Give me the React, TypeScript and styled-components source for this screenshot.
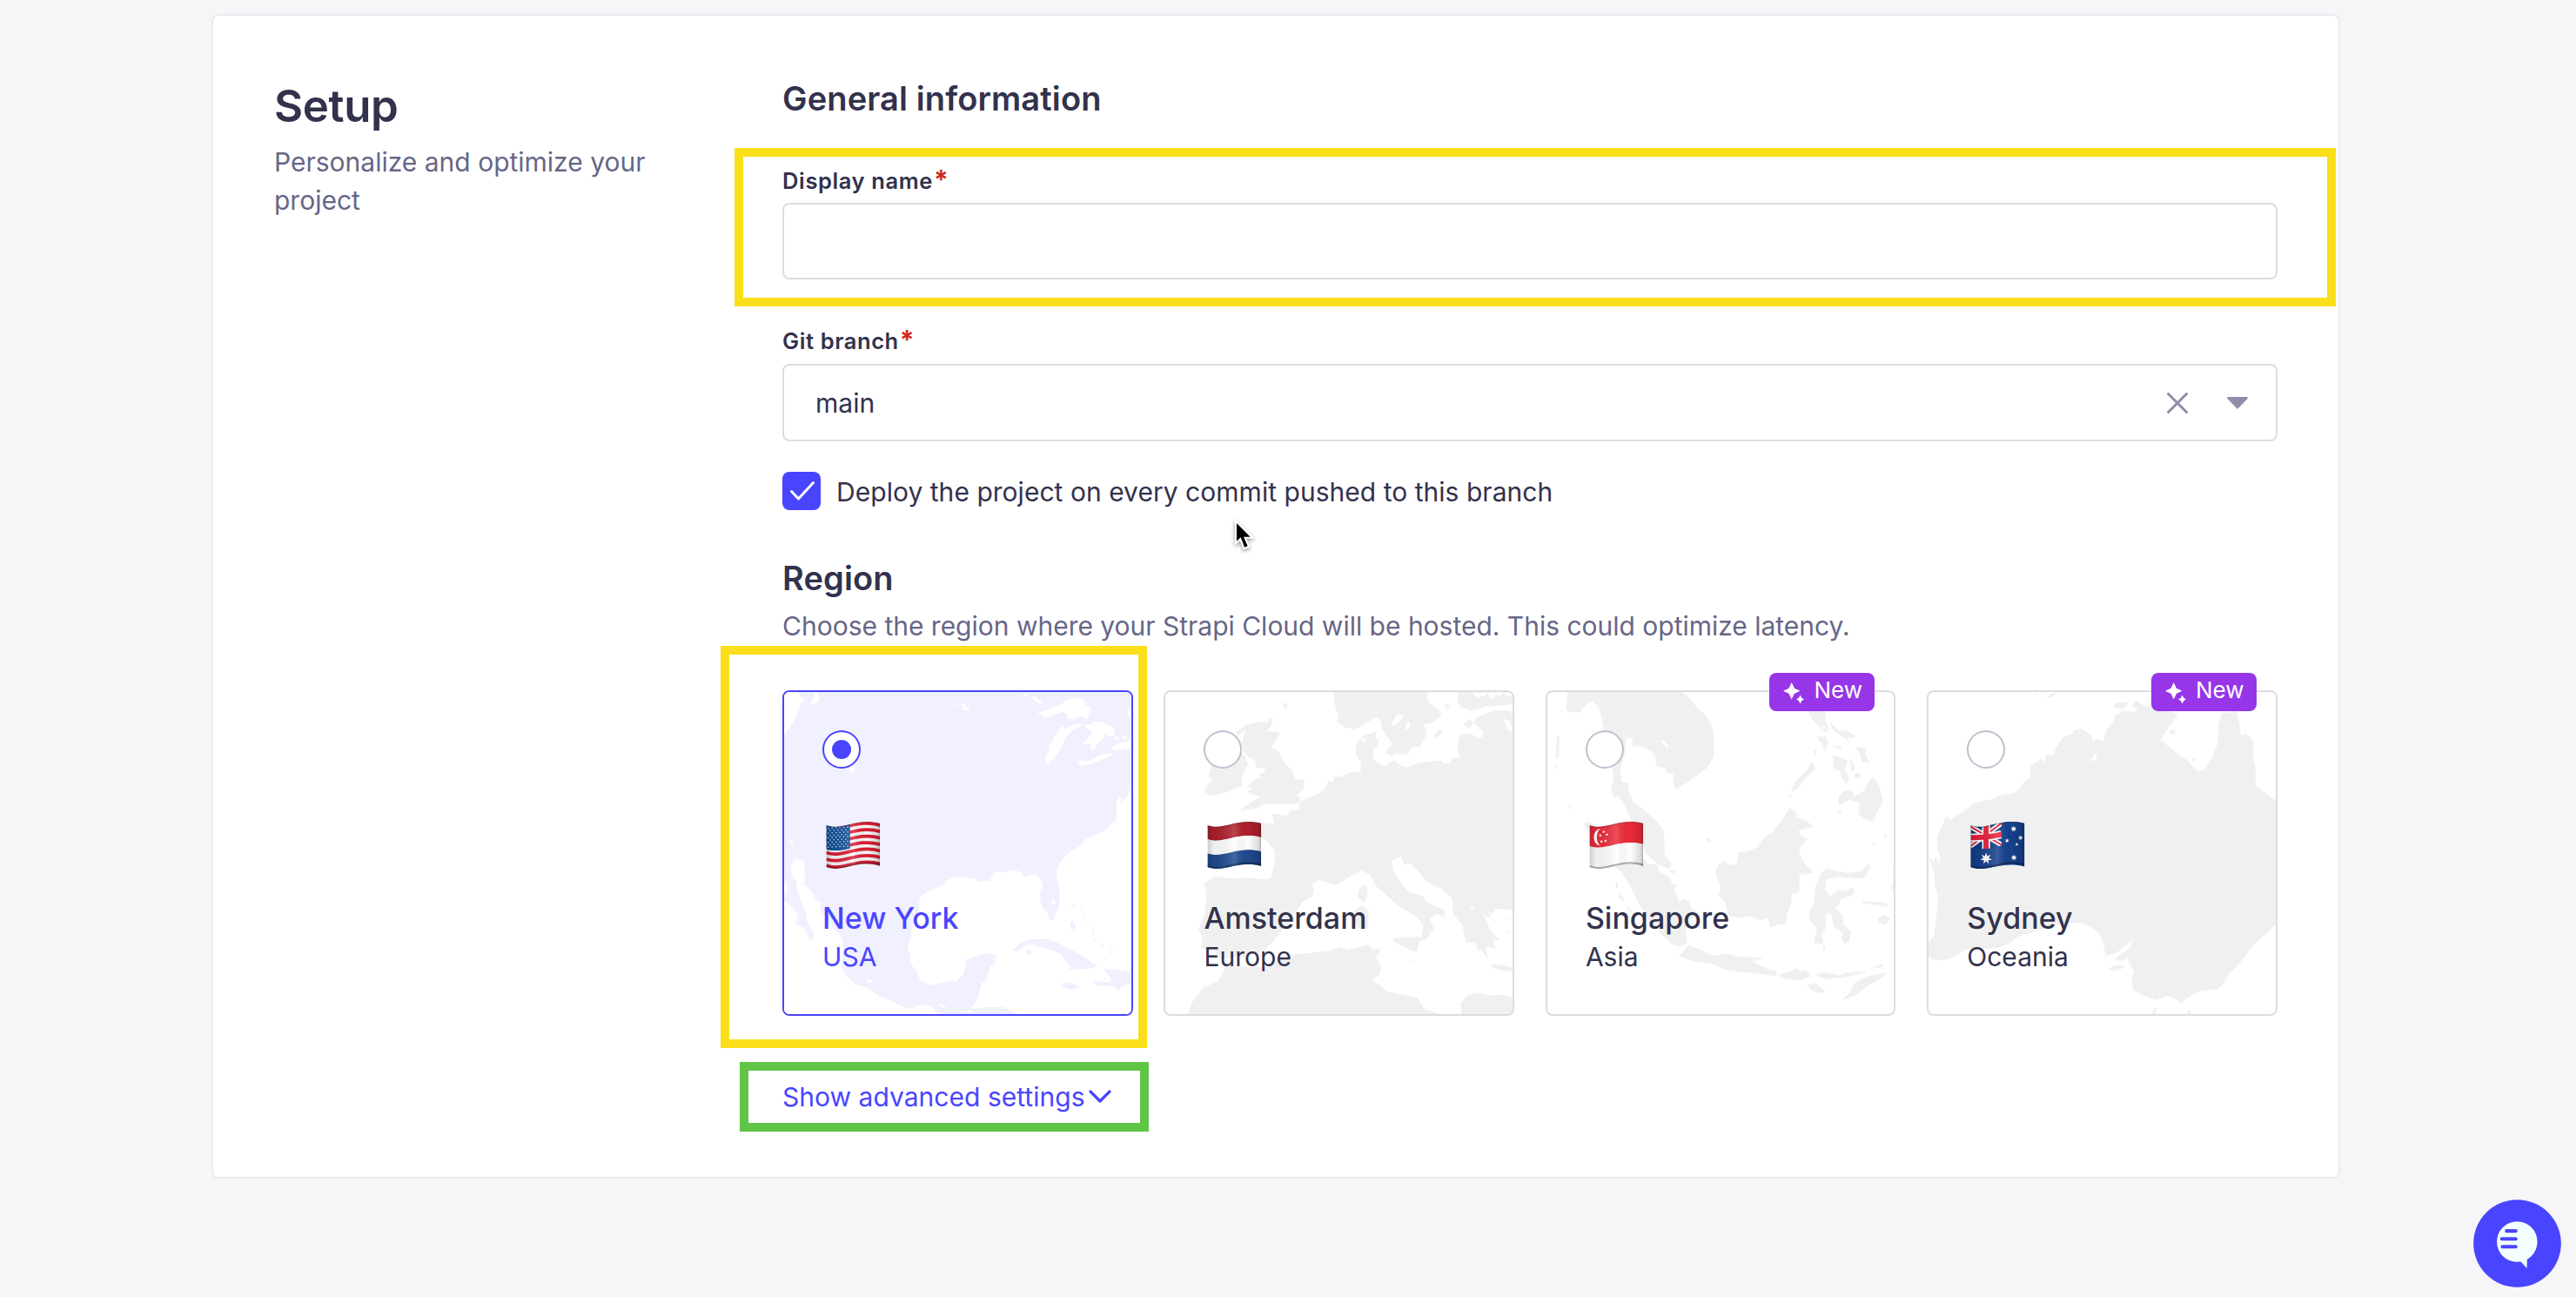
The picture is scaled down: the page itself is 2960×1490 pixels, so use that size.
import React from 'react';
import styled, { createGlobalStyle } from 'styled-components';

const c = {
  ink: '#32324d',
  muted: '#666687',
  icon: '#8e8ea9',
  radio: '#c0c0cf',
  line: '#dcdce4',
  panelLine: '#eaeaef',
  page: '#f6f6f9',
  primary: '#4945ff',
  primarySoft: '#f0f0ff',
  land: '#f0f0f0',
  danger: '#d02b20',
  badge: '#9736e8',
  yellow: '#fbdf1b',
  green: '#60c446',
};

const GlobalStyle = createGlobalStyle`
  * { box-sizing: border-box; }
  body {
    margin: 0;
    background: ${c.page};
    color: ${c.ink};
    font-family: Inter, "Liberation Sans", sans-serif;
    overflow: hidden;
  }
  h1, h2, p { margin: 0; }
`;

const Page = styled.main`
  position: relative;
  width: 2960px;
  height: 1490px;
  padding: 16px 0 0 243px;
`;

const Panel = styled.section`
  display: flex;
  width: 2446px;
  height: 1338px;
  padding: 71px 70px 70px;
  background: #fff;
  border: 2px solid ${c.panelLine};
  border-radius: 8px;
`;

const Intro = styled.div`
  flex: none;
  width: 584.1px;
  padding-top: 3px;
`;

const Title = styled.h1`
  font-size: 51px;
  line-height: 60px;
  font-weight: 600;
  letter-spacing: -0.4px;
`;

const Lead = styled.p`
  width: 460px;
  margin-top: 13px;
  font-size: 30px;
  line-height: 43.7px;
  letter-spacing: 0;
  color: ${c.muted};
`;

const Form = styled.div`
  display: flex;
  flex: none;
  flex-direction: column;
  width: 1717.8px;
`;

const Heading = styled.h2<{ $gap?: number }>`
  margin-top: ${(p) => p.$gap ?? 0}px;
  font-size: 38px;
  line-height: 48px;
  font-weight: 600;
  letter-spacing: 0.12px;
`;

const Field = styled.div<{ $gap: number }>`
  display: flex;
  flex-direction: column;
  gap: ${(p) => p.$gap}px;
  margin-top: 53px;
`;

const Label = styled.label`
  font-size: 25.5px;
  line-height: 36px;
  font-weight: 600;
  letter-spacing: 0.6px;
`;

const Required = styled.span`
  color: ${c.danger};
  margin-left: 1px;
  font-size: 30px;
  line-height: 0;
  font-weight: 700;
`;

const Control = styled.div<{ $height: number }>`
  display: flex;
  align-items: center;
  height: ${(p) => p.$height}px;
  padding: 0 32px 0 36px;
  border: 2px solid ${c.line};
  border-radius: 8px;
  font-size: 30px;
  line-height: 44px;
`;

const ControlValue = styled.span`
  flex: 1;
`;

const ControlIcons = styled.div`
  display: flex;
  align-items: center;
  gap: 45px;
`;

const CheckRow = styled.div`
  display: flex;
  gap: 18px;
  margin-top: 35px;
  height: 44px;
`;

const CheckBox = styled.span`
  display: flex;
  align-items: center;
  justify-content: center;
  width: 44px;
  height: 44px;
  padding-left: 1px;
  border-radius: 8px;
  background: ${c.primary};
`;

const CheckLabel = styled.span`
  padding-top: 1px;
  font-size: 30px;
  line-height: 44px;
  letter-spacing: 0.03px;
`;

const Hint = styled.p`
  margin-top: 9px;
  font-size: 30px;
  line-height: 44px;
  letter-spacing: -0.01px;
  color: ${c.muted};
`;

const Regions = styled.div`
  display: grid;
  grid-template-columns: repeat(4, 1fr);
  gap: 35.8px;
  margin-top: 52px;
`;

const RegionCard = styled.div<{ $selected?: boolean }>`
  position: relative;
  display: flex;
  flex-direction: column;
  height: 374px;
  padding: 44px;
  border: 2px solid ${(p) => (p.$selected ? c.primary : c.line)};
  border-radius: 8px;
  color: ${(p) => (p.$selected ? c.primary : c.ink)};
`;

const MapSvg = styled.svg`
  position: absolute;
  inset: 0;
  width: 100%;
  height: 100%;
  border-radius: 6px;
`;

const Radio = styled.span<{ $selected?: boolean }>`
  position: relative;
  display: flex;
  align-items: center;
  justify-content: center;
  width: 44px;
  height: 44px;
  border: 2px solid ${(p) => (p.$selected ? c.primary : c.radio)};
  border-radius: 50%;
  background: #fff;
`;

const RadioDot = styled.span`
  width: 22px;
  height: 22px;
  border-radius: 50%;
  background: ${c.primary};
`;

const FlagSvg = styled.svg`
  position: relative;
  width: 63px;
  height: 57px;
  margin: 60px 0 34px 4px;
`;

const City = styled.span`
  position: relative;
  font-size: 34px;
  line-height: 44px;
  font-weight: 500;
`;

const Country = styled.span`
  position: relative;
  font-size: 30px;
  line-height: 44px;
`;

const NewBadge = styled.span`
  position: absolute;
  top: -22px;
  right: 22px;
  display: flex;
  align-items: center;
  gap: 11px;
  width: 121px;
  height: 44px;
  padding: 0 0 4px 16px;
  border-radius: 8px;
  background: ${c.badge};
  color: #fff;
  font-size: 26px;
  line-height: 36px;
`;

const BadgeIcon = styled.svg`
  width: 24px;
  height: 25px;
  margin-top: 6px;
`;

const AdvancedLink = styled.a`
  display: flex;
  align-items: center;
  gap: 5px;
  margin-top: 71px;
  font-size: 30px;
  line-height: 44px;
  letter-spacing: 0.02px;
  color: ${c.primary};
`;

const Highlight = styled.div<{ $x: number; $y: number; $w: number; $h: number; $color: string }>`
  position: absolute;
  left: ${(p) => p.$x}px;
  top: ${(p) => p.$y}px;
  width: ${(p) => p.$w}px;
  height: ${(p) => p.$h}px;
  border: 10px solid ${(p) => p.$color};
  pointer-events: none;
`;

const Pointer = styled.svg`
  position: absolute;
  left: 1412px;
  top: 594px;
  width: 36px;
  height: 46px;
  filter: drop-shadow(0 2px 2px rgba(0, 0, 0, 0.4));
`;

const ChatButton = styled.svg`
  position: absolute;
  left: 2842px;
  top: 1378px;
  width: 101px;
  height: 101px;
`;

/* Map outlines */

const NorthAmerica = () => (
  <MapSvg viewBox="244 195 1196 1110" preserveAspectRatio="none">
    <rect x="244" y="195" width="1196" height="1110" fill={c.primarySoft} />
    <g fill="#fff" stroke="#fff" strokeWidth="2" strokeLinejoin="round">
      <path d="M244 195H290L302 232L296 245C290 275 275 305 244 342Z" />
      <path d="M290 195L302 226L325 230L345 236L362 228L365 210L358 195Z" />
      <path d="M828 236L840 237L836 241ZM852 236L862 235L870 248L884 252V257L862 257L860 247ZM1067 205L1078 199L1082 206L1072 210ZM1100 212H1112L1120 222L1134 230L1130 234L1112 228Z" />
      <path d="M1118 270L1138 262L1170 250L1205 235L1212 225L1250 216L1278 222L1281 240L1299 245V262L1292 285L1280 286L1270 277L1240 287L1220 285L1222 274L1208 262L1180 270L1148 283H1138L1136 274Z" />
      <path d="M1270 305L1262 314L1240 325L1222 340L1208 365L1195 395L1172 425L1155 442L1145 438L1148 415L1158 395L1160 375L1172 362L1180 340L1198 318L1210 312L1205 328L1225 316L1245 308Z" />
      <path d="M1282 308L1310 306L1310 298L1345 300L1352 308L1378 318L1383 345L1365 349L1348 338L1345 355L1325 370L1312 395L1300 388L1302 374H1270L1290 358L1305 340L1303 325L1285 320Z" />
      <path d="M1256 435L1275 430L1290 436L1320 420L1350 408H1378L1360 420L1320 435L1290 446L1262 447ZM1370 390L1390 375L1420 368L1440 362V390L1405 392L1385 395ZM1385 352L1397 349L1399 355L1387 359ZM1410 350L1420 345L1423 353L1415 358ZM1440 255L1428 265L1432 278H1440Z" />
      <path d="M472 455H485L489 465L478 474L471 468ZM266 706L275 711V719L270 720ZM532 1183L548 1191L545 1197H534ZM778 1267L800 1280L798 1285L783 1277ZM876 1298L882 1288L888 1293L884 1298Z" />
      <path d="M1440 525L1432 550L1410 570L1395 587L1407 560L1400 553L1390 575L1392 615L1388 640L1365 655L1362 665L1330 682L1300 697L1288 700L1260 728L1225 750C1195 775 1180 805 1186 835L1194 870L1195 925L1185 950L1175 980L1158 982L1150 955L1135 940L1127 920L1125 890L1135 860L1125 838L1110 822L1070 833L1060 815L1030 810L1005 817L965 815V832L955 835L962 850L935 845L912 852L905 840L880 835L840 832C800 840 800 862 780 868L745 880L720 895L710 915L712 950L695 985L685 1010L682 1040L670 1072L680 1100V1130L702 1158L712 1185L745 1205L780 1198L830 1188L835 1195L860 1170L865 1150L872 1115L900 1106L940 1095L975 1102L972 1135L955 1140L942 1190L925 1200L915 1245L905 1265L888 1285L940 1280L1000 1280L1020 1290L1048 1305H1440Z" />
      <path d="M244 915L262 928L282 950L292 965L280 995L305 1003L320 1020L332 1052L350 1045L345 1020L325 990L322 960L305 920L295 890L285 865L290 850L270 825L268 800L280 770L312 778L316 830L312 858L345 890L350 908L372 925L365 945L395 985L405 1000L435 1030L448 1060L440 1140L455 1170L490 1205L530 1215L570 1243L610 1258L650 1280L685 1288L715 1273L750 1278L775 1305H244ZM244 842L250 858L258 868L255 880L244 895Z" />
    </g>
    <g fill={c.primarySoft}>
      <path d="M292 195L305 215L325 232L342 226L350 208L345 195Z" />
      <path d="M1032 1085L1055 1062L1090 1048L1145 1046L1180 1056L1210 1070L1250 1092L1280 1110L1325 1140L1300 1148L1226 1152L1232 1140L1210 1120L1200 1100L1170 1085L1120 1072L1095 1063L1065 1073L1050 1088Z" />
      <path d="M1345 1150L1400 1153L1440 1158V1200L1415 1205L1395 1224L1380 1208L1330 1208L1312 1200L1320 1191L1360 1195L1372 1190L1362 1170ZM1200 1200L1220 1196L1245 1200L1260 1212L1240 1220L1212 1215Z" />
      <path d="M1237 980L1250 1000L1246 1022L1238 1017L1228 998ZM1342 1115L1362 1107L1350 1117ZM1350 1178L1358 1186L1348 1188ZM1397 1087L1405 1089L1400 1092Z" />
      <circle cx="1088" cy="1092" r="8" />
    </g>
    <g fill="none" stroke={c.primarySoft} strokeWidth="4" strokeLinecap="round">
      <path d="M1230 932H1248M1266 928Q1276 938 1270 950M1277 966L1281 972M1290 988L1293 992M1308 1003L1312 1026M1312 1046L1322 1054M1337 1064L1343 1070M1370 1072L1366 1078" />
    </g>
    <circle cx="1173" cy="920" r="7" fill="#fff" />
  </MapSvg>
);

const Europe = () => (
  <MapSvg viewBox="60 75 1197 1110" preserveAspectRatio="none">
    <g fill={c.land} stroke={c.land} strokeWidth="3" strokeLinejoin="round">
      <path d="M642 75L647 120L660 165L654 178L680 195L710 202L740 190L770 170L790 160L805 175L810 205L825 225L845 255L832 265L822 285L845 295L850 285L880 290L900 285L905 265L940 262L950 235L960 210L950 185L985 178L1012 155L1005 138L970 112L962 95L965 75Z" />
      <path d="M1070 75V105L1080 125L1115 137L1150 130L1165 122L1200 122L1257 115V75Z" />
      <path d="M1257 152L1250 140L1195 140L1165 150L1130 165L1128 185L1145 198L1157 210L1155 232L1140 235L1115 220L1080 222L1072 250L1070 275L1078 300L1050 305L1045 320L1020 325L1010 312L960 318L920 325L895 338L870 328L852 312L832 318L825 330L805 330L790 318L772 306L778 290L775 268L792 262L795 240L782 235L787 212L742 228L722 250L718 290L738 320L735 350L690 355L665 370L645 368L640 390L625 380L610 410L585 430L540 447L525 455V480L490 485L480 505L445 495L430 497L438 530L400 530L375 520L360 545L392 575L415 590L438 620L440 660L430 700L425 720L395 722L340 716L290 720L250 715L230 712L195 735L203 770L200 830L190 860L175 895L190 920L185 958L225 960L250 995L300 985L345 985L400 965L435 930L450 910L500 850L530 800L565 780L572 760L565 735L590 722L650 738L690 715L735 688L770 705L785 740L830 780L870 815L900 832L930 850L952 880L945 920L935 935L960 925L985 890L970 855L1000 838L1022 850L1025 828L960 800L950 780L900 765L870 730L845 690L840 655L875 640L885 668L910 665L935 695L965 730L1010 750L1050 785L1055 840L1085 875L1098 935L1130 938L1140 965L1152 960L1170 992L1165 950L1200 957L1185 925L1212 930L1180 895L1155 840L1180 850L1200 820L1257 825Z" />
      <path d="M340 190L375 180L415 180L418 165L430 165L425 190L405 210L455 215L435 250L425 268L450 280L470 320L500 350L505 375L540 380L535 410L510 430L525 440L520 455L490 460L440 460L400 460L375 475L320 482L350 460L375 445L390 435L345 420L365 405L345 400L365 380L388 370L390 355L405 355V335L375 335L370 310L350 300L330 280L325 250L335 220Z" />
      <path d="M320 280L335 300L345 325L330 345L322 375L325 395L300 408L270 420L215 432L195 415L225 375L210 365L220 335L215 310L260 280ZM305 215L340 186L335 205L312 225ZM468 115H480V128H470Z" />
      <path d="M845 925L930 920L940 925L925 970L900 960L850 935ZM752 740L757 775L745 800L725 780L730 755ZM712 830L740 810L760 830L758 890L735 895L720 880Z" />
      <path d="M142 1185L150 1150L190 1095L240 1075L262 1040L270 1010L300 1022L400 1025L470 985L560 975L620 970L665 955L690 965L760 948L775 965L803 960L785 990L803 1020L800 1045L770 1070L800 1085L830 1110L870 1118L930 1130L950 1165L1000 1185ZM1085 1185L1080 1150L1100 1125L1135 1112L1180 1122L1225 1120L1257 1130V1185Z" />
      <path d="M1188 1013L1220 1018L1257 1025V1037L1225 1033L1190 1025ZM990 235L995 215L1015 205L1010 220ZM950 240L962 220L960 230ZM1027 118L1042 122L1038 132L1027 128ZM1090 185L1110 170L1122 182L1108 202ZM903 999L910 1003L905 1004ZM860 235L875 228L877 240ZM1232 855H1255M1235 900L1250 905" />
    </g>
    <g fill="#fff" stroke="#fff" strokeWidth="2" strokeLinejoin="round">
      <path d="M838 185L850 172L860 153L880 155L878 168L862 180L845 191ZM890 210L892 185L902 178L904 192ZM1228 165L1250 180L1257 212L1240 200ZM740 235L750 238L748 248L738 244Z" />
      <path d="M1122 80L1135 92L1150 95L1142 83L1160 90L1172 78L1180 94L1190 98L1200 80L1212 92L1220 78H1257V84L1240 88L1232 80L1205 77Z" />
      <path d="M1175 832L1205 850L1225 868L1200 860ZM1215 880L1250 872L1257 900L1235 895ZM1110 810L1130 820L1118 822Z" />
    </g>
  </MapSvg>
);

const SouthEastAsia = () => (
  <MapSvg viewBox="54 135 1197 1110" preserveAspectRatio="none">
    <g fill={c.land} stroke={c.land} strokeWidth="3" strokeLinejoin="round">
      <path d="M125 135L120 195L135 203L165 205L185 180L210 162L235 190L245 240L258 290L290 350L280 400L285 440L275 470L285 500L300 490L325 530L340 570L380 640L395 690L440 730L475 742L482 728L458 695L455 615L430 580L385 540L350 515L330 470L335 450L308 445L305 400L320 350L325 292H350V320L385 322L415 340L430 360V390L460 395L470 415L490 415V460L500 470L550 435L605 395L628 355L627 290C622 210 560 190 560 175L520 135Z" />
      <path d="M182 588L200 583L390 715L400 730L430 730L440 755L475 775L495 830L510 865L520 850L540 855L550 880L575 895L530 930V960L535 1000L510 1012L480 1000L440 960L400 915L375 870L340 800L310 755L250 700L190 605Z" />
      <path d="M635 760L645 730L665 718L680 733L708 730L715 690L750 685L780 670L800 640L830 620L870 570L890 535L910 550L915 570L940 575L970 598L920 610L925 630L950 640L920 680L935 720L970 757L922 765V825L895 830V860L880 900L875 935L850 935L825 945L815 912L790 920L755 905L720 912L680 905L670 860L645 835L655 810Z" />
      <path d="M510 1045L540 1010L575 1020L610 1040L640 1045L670 1038L720 1050L795 1052L755 1062L790 1080L830 1095L845 1112L790 1105L720 1098L660 1088L620 1070L560 1062ZM855 1110L885 1102L915 1090L930 1100L945 1093L960 1112L940 1125L900 1125L870 1120ZM980 1110L1010 1102L1060 1112L1090 1102L1155 1100L1120 1108L1075 1118L1010 1122ZM1075 1195L1100 1170L1115 1140L1160 1115L1225 1103L1205 1122L1160 1145L1120 1178ZM950 1145L980 1140L1010 1165L1000 1172L970 1165ZM1180 1085L1200 1076H1215L1205 1084ZM825 1098L840 1094L846 1106L832 1108Z" />
      <path d="M975 1000L985 950L960 920V890L975 865L980 810L1000 760L1020 745L1045 752L1090 760L1135 755L1160 730L1172 735L1145 775L1110 775L1060 770L1015 780L1010 815L1030 840L1060 820L1085 822L1105 812L1115 822L1105 835L1070 845L1055 870L1045 875L1075 910V935L1100 960L1095 995L1080 1000L1070 985L1075 965L1045 945L1038 915L1035 900L1015 895L1012 950L1000 970L1005 1000Z" />
      <path d="M955 200H1015L1010 235L1025 262L1015 275L990 250L970 230ZM1030 240L1060 270L1085 270L1115 285L1110 292L1080 290L1100 310L1070 285L1040 265ZM985 290L1015 290L1022 310L1010 335L1000 310ZM1040 355L1075 365L1090 375L1080 400L1095 440L1085 450L1070 430L1065 405L1045 400ZM1120 325L1155 330L1150 350L1165 380L1140 375L1135 350ZM1100 365L1115 400L1105 410ZM1115 418L1132 415L1135 428L1118 432ZM1042 320L1065 325L1070 332ZM975 338L983 336L978 350Z" />
      <path d="M1060 525V495L1080 475L1108 480L1110 500L1125 490L1150 475L1165 440L1180 430L1200 465L1210 515L1190 550L1175 582L1150 572L1130 555V515L1095 505L1068 520ZM897 478L915 440L955 400L965 375L978 400L950 425L920 462ZM1055 545H1070L1062 552ZM890 490L896 497L890 498Z" />
      <path d="M1251 725L1248 755L1251 790L1240 810L1251 822ZM1195 915L1215 905L1236 918L1220 935L1200 928ZM1143 857L1200 860L1228 865L1225 876L1205 870L1145 862ZM88 290H96L92 360H84ZM80 390H88L84 398ZM605 640L615 638L617 652L607 650ZM592 895L610 890L612 905L595 902ZM485 800L503 798L490 815ZM475 750H495L490 760ZM290 790L297 795L294 812ZM300 825L318 850L315 858L303 845ZM325 870L350 895L340 890ZM130 527L137 530L136 538ZM1217 625L1223 630L1220 642ZM1178 655L1183 660L1180 664ZM1008 1010L1012 1012L1008 1030Z" />
    </g>
    <g fill="#fff">
      <path d="M442 300L455 303L475 325L465 328ZM1000 255L1010 250L1015 262L1002 262Z" />
    </g>
  </MapSvg>
);

const Australia = () => (
  <MapSvg viewBox="78 135 1197 1110" preserveAspectRatio="none">
    <g fill={c.land} stroke={c.land} strokeWidth="3" strokeLinejoin="round">
      <path d="M78 1000L98 975L108 900L112 840L102 800L100 765L82 705L95 720L103 705L115 735L120 705L108 670L110 630L130 590L135 570L147 565L150 580L180 558L205 545L235 520L300 505L320 493L380 482L410 445L430 430L432 390L470 365L478 390L485 352L510 355L520 325L545 290L575 280L580 268L605 262L640 285L645 312L655 298L685 305L690 270L715 240L725 215L750 203L795 205L800 195L780 180L795 165L820 185L850 185L935 210L920 240L895 270L878 300L930 345L970 370L995 400L1012 410L1035 400L1060 355L1078 310L1080 250L1090 210L1140 200L1148 240L1155 285L1175 280L1197 305L1195 350L1205 400V455L1235 480L1275 510V935L1250 960L1200 1005L1150 1070L1110 1110L1095 1140L1075 1157L1010 1165L975 1185L948 1207L930 1190L900 1180L865 1195L820 1180L785 1160L780 1130L790 1100L775 1075L765 1055L785 985L730 1030L690 1045L685 1010L668 965L640 945L600 928L540 930L440 960L390 975L350 1005L320 1015L270 1018L210 1020L150 1055L100 1058L78 1045Z" />
      <path d="M700 1090L720 1078L753 1080L740 1090L710 1095ZM722 1058L735 1045L775 1018L770 1045L750 1060ZM715 185L730 172H765L755 188L740 192ZM912 268L928 262V278L914 281ZM850 1245L855 1227L865 1225L860 1243ZM972 1236L982 1234V1245H975ZM487 155L500 142L520 138L503 152ZM452 140L455 147L450 146ZM987 370L1000 363L995 374ZM920 333L926 338H920Z" />
    </g>
    <path d="M641 370L650 348L660 350L655 368L645 375Z" fill="#fff" />
  </MapSvg>
);

/* Flags */

const FLAG_OUTLINE = 'M0 13C55 34 105 -16 188 7V157C105 136 55 180 0 159Z';

const wave = (y: number) => `M0 ${y}C55 ${y + 21} 105 ${y - 29} 188 ${y - 6}`;

const band = (from: number, to: number) =>
  `M0 ${from}C55 ${from + 21} 105 ${from - 29} 188 ${from - 6}V${to - 6}C105 ${to - 29} 55 ${to + 21} 0 ${to}Z`;

const Flag = ({ id, children }: { id: string; children: React.ReactNode }) => (
  <FlagSvg viewBox="0 -2 189 171">
    <defs>
      <clipPath id={`${id}-clip`}>
        <path d={FLAG_OUTLINE} />
      </clipPath>
      <linearGradient id={`${id}-shade`} x1="0" x2="1" y1="0" y2="0">
        <stop offset="0" stopColor="#000" stopOpacity="0.2" />
        <stop offset="0.12" stopColor="#000" stopOpacity="0.06" />
        <stop offset="0.5" stopColor="#fff" stopOpacity="0.16" />
        <stop offset="0.75" stopColor="#000" stopOpacity="0" />
        <stop offset="0.95" stopColor="#000" stopOpacity="0.14" />
        <stop offset="1" stopColor="#000" stopOpacity="0.35" />
      </linearGradient>
    </defs>
    <g clipPath={`url(#${id}-clip)`}>
      {children}
      <path d={FLAG_OUTLINE} fill={`url(#${id}-shade)`} />
      <path d={wave(157)} fill="none" stroke="#000" strokeOpacity="0.3" strokeWidth="7" />
      <path d={wave(14)} fill="none" stroke="#333" strokeOpacity="0.25" strokeWidth="6" />
    </g>
  </FlagSvg>
);

const starPoints = (cx: number, cy: number, r: number, n: number, inner = 0.45) =>
  Array.from({ length: n * 2 }, (_, i) => {
    const a = (Math.PI * i) / n - Math.PI / 2;
    const k = i % 2 ? r * inner : r;
    return `${(cx + Math.cos(a) * k).toFixed(1)},${(cy + Math.sin(a) * k).toFixed(1)}`;
  }).join(' ');

const UsaFlag = () => (
  <Flag id="us">
    <rect y="-5" width="190" height="175" fill="#f7f7f7" />
    {Array.from({ length: 7 }, (_, i) => (
      <path key={i} d={wave(18.6 + i * 22.5)} fill="none" stroke="#dc1d35" strokeWidth="11.4" />
    ))}
    <path d="M0 12C25 22 55 20 83 9V94C55 102 25 104 0 97Z" fill="#11539c" />
    {Array.from({ length: 9 }, (_, r) =>
      Array.from({ length: r % 2 ? 5 : 6 }, (_, k) => (
        <circle key={`${r}-${k}`} cx={7 + k * 13.6 + (r % 2 ? 6.8 : 0)} cy={24 + r * 8.2 - k * 0.8} r="2.3" fill="#eaf3ff" />
      )),
    )}
  </Flag>
);

const DutchFlag = () => (
  <Flag id="nl">
    <path d={band(8, 62)} fill="#ae1f2d" />
    <path d={band(62, 111)} fill="#fff" />
    <path d={band(111, 162)} fill="#1f4a8f" />
  </Flag>
);

const SingaporeFlag = () => (
  <Flag id="sg">
    <path d={band(8, 86)} fill="#ec2b3b" />
    <path d={band(86, 162)} fill="#fff" />
    <path d="M38 25C8 30 8 80 38 84C22 72 22 38 38 25Z" fill="#fff" />
    {[[50, 36], [38, 49], [61, 46], [42, 70], [56, 68]].map(([x, y]) => (
      <polygon key={`${x}${y}`} points={starPoints(x, y, 5.5, 5, 0.5)} fill="#fff" />
    ))}
  </Flag>
);

const AustralianFlag = () => (
  <Flag id="au">
    <path d={band(8, 162)} fill="#0d3a86" />
    <g>
      <path d="M0 18L108 82M0 86L108 6" stroke="#fff" strokeWidth="17" />
      <path d="M0 18L108 82M0 86L108 6" stroke="#e8203a" strokeWidth="6" />
      <path d="M54 10V96M0 56Q54 58 108 45" stroke="#fff" strokeWidth="28" fill="none" />
      <path d="M54 10V96M0 56Q54 58 108 45" stroke="#e8203a" strokeWidth="18" fill="none" />
      <path d="M108 -5H190V170H0V93Q60 102 108 84Z" fill="#15408c" />
    </g>
    <polygon points={starPoints(54, 129, 21, 7)} fill="#fff" />
    <polygon points={starPoints(150, 26, 11, 7)} fill="#fff" />
    <polygon points={starPoints(127, 67, 8, 7)} fill="#fff" />
    <polygon points={starPoints(174, 57, 9, 7)} fill="#fff" />
    <polygon points={starPoints(161, 80, 6, 5)} fill="#fff" />
    <polygon points={starPoints(151, 126, 11, 7)} fill="#fff" />
  </Flag>
);

const Sparkles = () => (
  <BadgeIcon viewBox="0 0 24 25" fill="#fff">
    <path d="M9.7 0L13 6.7L19.4 9.7L13 12.8L9.7 19.4L6.5 12.8L0 9.7L6.5 6.7Z" />
    <path d="M19.6 14.5L21.3 17.8L24 19.4L21.3 21.1L19.6 24.4L17.9 21.1L15 19.4L17.9 17.8Z" />
  </BadgeIcon>
);

const regions = [
  { city: 'New York', country: 'USA', Map: NorthAmerica, FlagIcon: UsaFlag, selected: true, isNew: false },
  { city: 'Amsterdam', country: 'Europe', Map: Europe, FlagIcon: DutchFlag, selected: false, isNew: false },
  { city: 'Singapore', country: 'Asia', Map: SouthEastAsia, FlagIcon: SingaporeFlag, selected: false, isNew: true },
  { city: 'Sydney', country: 'Oceania', Map: Australia, FlagIcon: AustralianFlag, selected: false, isNew: true },
];

export default function App() {
  return (
    <Page>
      <GlobalStyle />
      <Panel>
        <Intro>
          <Title>Setup</Title>
          <Lead>Personalize and optimize your project</Lead>
        </Intro>
        <Form>
          <Heading>General information</Heading>
          <Field $gap={7}>
            <Label>Display name<Required>*</Required></Label>
            <Control $height={88} />
          </Field>
          <Field $gap={8}>
            <Label>Git branch<Required>*</Required></Label>
            <Control $height={89}>
              <ControlValue>main</ControlValue>
              <ControlIcons>
                <svg width="24" height="24" viewBox="0 0 24 24">
                  <path d="M1.5 1.5L22.5 22.5M22.5 1.5L1.5 22.5" stroke={c.icon} strokeWidth="3" strokeLinecap="round" />
                </svg>
                <svg width="24" height="14" viewBox="0 0 24 14">
                  <path d="M1 0H23Q24.5 .8 23.5 2L13 13Q12 14 11 13L.5 2Q-.5 .8 1 0Z" fill={c.icon} />
                </svg>
              </ControlIcons>
            </Control>
          </Field>
          <CheckRow>
            <CheckBox>
              <svg width="30" height="24" viewBox="0 0 30 24">
                <path d="M2.5 12.5L10.5 21L27.5 2.5" fill="none" stroke="#fff" strokeWidth="3" strokeLinecap="round" strokeLinejoin="round" />
              </svg>
            </CheckBox>
            <CheckLabel>Deploy the project on every commit pushed to this branch</CheckLabel>
          </CheckRow>
          <Heading $gap={54}>Region</Heading>
          <Hint>Choose the region where your Strapi Cloud will be hosted. This could optimize latency.</Hint>
          <Regions>
            {regions.map(({ city, country, Map, FlagIcon, selected, isNew }) => (
              <RegionCard key={city} $selected={selected}>
                <Map />
                <Radio $selected={selected}>{selected && <RadioDot />}</Radio>
                <FlagIcon />
                <City>{city}</City>
                <Country>{country}</Country>
                {isNew && (
                  <NewBadge>
                    <Sparkles />
                    New
                  </NewBadge>
                )}
              </RegionCard>
            ))}
          </Regions>
          <AdvancedLink>
            Show advanced settings
            <svg width="26" height="16" viewBox="0 0 26 16">
              <path d="M2 2L13 13L24 2" fill="none" stroke={c.primary} strokeWidth="3.2" strokeLinecap="round" strokeLinejoin="round" />
            </svg>
          </AdvancedLink>
        </Form>
      </Panel>

      <Highlight $x={844} $y={170} $w={1840} $h={182} $color={c.yellow} />
      <Highlight $x={828} $y={742} $w={490} $h={462} $color={c.yellow} />
      <Highlight $x={850} $y={1220} $w={470} $h={80} $color={c.green} />

      <Pointer viewBox="36 27 108 138">
        <path
          d="M63 48V110L77 97L90 131L101 127L87 95H110Z"
          fill="#000"
          stroke="#fff"
          strokeWidth="13"
          paintOrder="stroke"
        />
      </Pointer>

      <ChatButton viewBox="187 114 302 302">
        <circle cx="338" cy="265" r="150.5" fill={c.primary} />
        <circle cx="337.500" cy="259" r="69.500" fill="#f4feff" />
        <path d="M345 322L371 350L372 312Z" fill="#f4feff" />
        <path d="M301 222H333M285 249H333M287 276H333" stroke={c.primary} strokeWidth="12" strokeLinecap="round" />
      </ChatButton>
    </Page>
  );
}
